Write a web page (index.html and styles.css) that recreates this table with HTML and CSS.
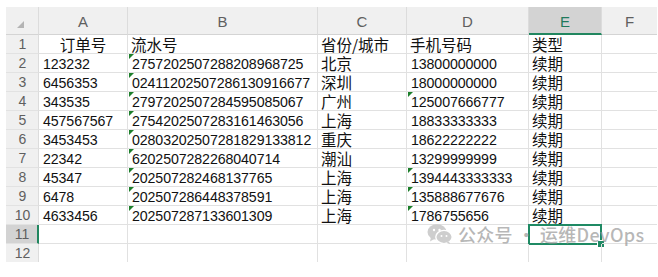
FILE: index.html
```html
<!DOCTYPE html>
<html lang="zh-CN">
<head>
<meta charset="utf-8">
<title>Sheet</title>
<link rel="stylesheet" href="styles.css">
</head>
<body>
<div class="sheet">
  <div class="corner"><span class="tri"></span></div>
  <div class="ch">A</div><div class="ch">B</div><div class="ch">C</div><div class="ch">D</div><div class="ch sel">E</div><div class="ch last">F</div>

  <div class="rh">1</div>
  <div class="c cn center">订单号</div><div class="c cn">流水号</div><div class="c cn">省份/城市</div><div class="c cn">手机号码</div><div class="c cn">类型</div><div class="c last"></div>

  <div class="rh">2</div>
  <div class="c num">123232</div><div class="c num err">2757202507288208968725</div><div class="c cn">北京</div><div class="c num">13800000000</div><div class="c cn">续期</div><div class="c last"></div>

  <div class="rh">3</div>
  <div class="c num">6456353</div><div class="c num err">02411202507286130916677</div><div class="c cn">深圳</div><div class="c num">18000000000</div><div class="c cn">续期</div><div class="c last"></div>

  <div class="rh">4</div>
  <div class="c num">343535</div><div class="c num err">2797202507284595085067</div><div class="c cn">广州</div><div class="c num err">125007666777</div><div class="c cn">续期</div><div class="c last"></div>

  <div class="rh">5</div>
  <div class="c num">457567567</div><div class="c num err">2754202507283161463056</div><div class="c cn">上海</div><div class="c num">18833333333</div><div class="c cn">续期</div><div class="c last"></div>

  <div class="rh">6</div>
  <div class="c num">3453453</div><div class="c num err">02803202507281829133812</div><div class="c cn">重庆</div><div class="c num">18622222222</div><div class="c cn">续期</div><div class="c last"></div>

  <div class="rh">7</div>
  <div class="c num">22342</div><div class="c num err">6202507282268040714</div><div class="c cn">潮汕</div><div class="c num">13299999999</div><div class="c cn">续期</div><div class="c last"></div>

  <div class="rh">8</div>
  <div class="c num">45347</div><div class="c num err">202507282468137765</div><div class="c cn">上海</div><div class="c num err">1394443333333</div><div class="c cn">续期</div><div class="c last"></div>

  <div class="rh">9</div>
  <div class="c num">6478</div><div class="c num err">202507286448378591</div><div class="c cn">上海</div><div class="c num err">135888677676</div><div class="c cn">续期</div><div class="c last"></div>

  <div class="rh">10</div>
  <div class="c num">4633456</div><div class="c num err">202507287133601309</div><div class="c cn">上海</div><div class="c num err">1786755656</div><div class="c cn">续期</div><div class="c last"></div>

  <div class="rh sel">11</div>
  <div class="c"></div><div class="c"></div><div class="c"></div><div class="c"></div><div class="c active"><span class="handle"></span></div><div class="c last"></div>

  <div class="rh end">12</div>
  <div class="c end"></div><div class="c end"></div><div class="c end"></div><div class="c end"></div><div class="c end"></div><div class="c end last"></div>
</div>

<div class="watermark">
  <svg class="wx" width="26" height="20" viewBox="0 0 26 20">
    <ellipse cx="10" cy="8" rx="9.5" ry="7.8" fill="#c9c9c9"/>
    <path d="M4 13 L3 17.5 L8 14.5 Z" fill="#c9c9c9"/>
    <ellipse cx="17" cy="13" rx="8.2" ry="6.6" fill="#c9c9c9" stroke="#fff" stroke-width="1.4"/>
    <path d="M22 17.5 L23 20 L19.5 18.5 Z" fill="#c9c9c9"/>
    <circle cx="7" cy="6" r="1.2" fill="#fff"/>
    <circle cx="12.5" cy="6" r="1.2" fill="#fff"/>
    <circle cx="14.5" cy="12" r="1" fill="#fff"/>
    <circle cx="19.5" cy="12" r="1" fill="#fff"/>
  </svg>
  <span class="wtext">公众号 · 运维DevOps</span>
</div>
</body>
</html>
```

FILE: styles.css
```css
html, body {
  margin: 0;
  padding: 0;
  background: #ffffff;
}

body {
  padding: 7px 0 0 6px;
  height: 277px;
  box-sizing: border-box;
  overflow: hidden;
  position: relative;
  font-family: "Liberation Sans", "Noto Sans CJK SC", sans-serif;
}

.sheet {
  display: grid;
  grid-template-columns: 33px 89px 190px 89px 122px 73px 55px;
  grid-template-rows: 28px repeat(11, 19px) 18px;
  width: 651px;
}

.corner,
.ch,
.rh {
  background: #f0f0f0;
  color: #5f5f5f;
  box-sizing: border-box;
  font-family: "Liberation Sans", sans-serif;
  font-size: 14px;
}

.corner {
  border-right: 1px solid #dcdcdc;
  border-bottom: 1px solid #d4d4d4;
  position: relative;
}

.tri {
  position: absolute;
  left: 11px;
  top: 14px;
  width: 0;
  height: 0;
  border-left: 7px solid transparent;
  border-bottom: 7px solid #b4b4b4;
}

.ch {
  display: flex;
  align-items: center;
  justify-content: center;
  border-right: 1px solid #dcdcdc;
  border-bottom: 1px solid #d4d4d4;
  font-size: 15px;
  padding-top: 2px;
}

.ch.last {
  border-right: none;
}

.ch.sel {
  background: #d3d3d3;
  color: #1f7a5c;
  border-bottom: 2px solid #21865f;
}

.rh {
  display: flex;
  align-items: center;
  justify-content: center;
  border-right: 1px solid #dcdcdc;
  border-bottom: 1px solid #e2e2e2;
  font-size: 14px;
  padding-left: 1px;
}

.rh.sel {
  background: #d3d3d3;
  border-right: 2px solid #21865f;
}

.rh.end,
.c.end {
  border-bottom: none;
}

.c {
  box-sizing: border-box;
  border-right: 1px solid #e1e1e1;
  border-bottom: 1px solid #e1e1e1;
  padding: 2px 0 0 3px;
  white-space: nowrap;
  color: #111111;
  position: relative;
  line-height: 17px;
}

.c.last {
  border-right: none;
}

.num {
  font-family: "Liberation Sans", sans-serif;
  font-size: 14.2px;
  letter-spacing: -0.1px;
  padding-left: 4px;
}

.cn {
  font-family: "Noto Sans CJK SC", sans-serif;
  font-size: 15.5px;
  line-height: 16px;
  padding-top: 1px;
}

.center {
  text-align: center;
  padding-left: 0;
}

.err::before {
  content: "";
  position: absolute;
  left: 1px;
  top: 0;
  width: 0;
  height: 0;
  border-top: 5px solid #1d7f2b;
  border-right: 5px solid transparent;
}

.active {
  border: 2px solid #1f8a64;
  margin: -1px 0 0 -1px;
  width: calc(100% + 1px);
  height: calc(100% + 2px);
}

.handle {
  position: absolute;
  right: -5px;
  bottom: -5px;
  width: 6px;
  height: 6px;
  background: #1f8a64;
  border: 1px solid #ffffff;
}

.watermark {
  position: absolute;
  left: 427px;
  top: 224px;
  display: flex;
  align-items: center;
  gap: 5px;
  opacity: 0.9;
}

.wtext {
  font-family: "Noto Sans CJK SC", sans-serif;
  font-size: 18px;
  font-weight: 500;
  color: rgba(150, 150, 150, 0.75);
  letter-spacing: 0.3px;
  line-height: 20px;
}
```
